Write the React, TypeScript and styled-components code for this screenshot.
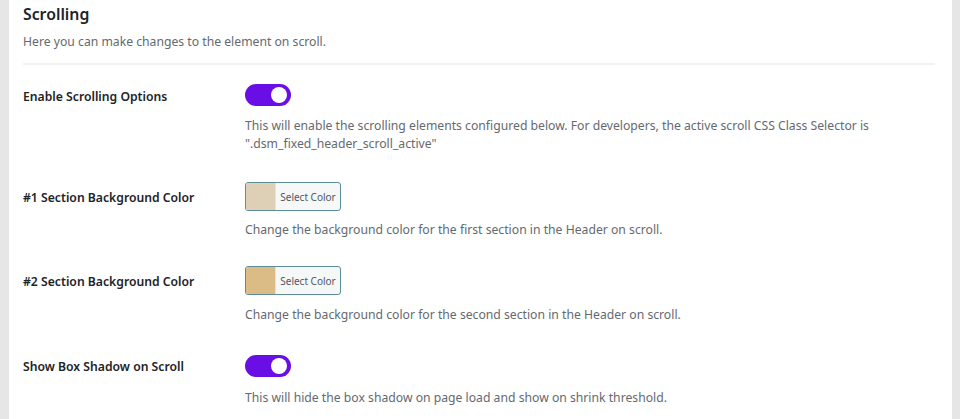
import React from "react";
import styled, { createGlobalStyle } from "styled-components";

const Global = createGlobalStyle`
  html, body { margin: 0; padding: 0; background: #e6e6e6; }
  body { font-family: "Noto Sans", "Open Sans", sans-serif; }
`;

const Page = styled.div`
  padding: 0 8px 0 9px;
  height: 419px;
  overflow: hidden;
`;

const Panel = styled.div`
  background: #ffffff;
  height: 100%;
  padding: 0 17px 0 14px;
  box-sizing: border-box;
`;

const Header = styled.div`
  padding-top: 3px;
  padding-bottom: 12px;
  border-bottom: 2px solid #f2f2f2;
`;

const Title = styled.h2`
  margin: 0;
  font-size: 15.8px;
  font-weight: 600;
  line-height: 23px;
  color: #1d2327;
`;

const Subtitle = styled.p`
  margin: 7px 0 0;
  font-size: 12.2px;
  line-height: 18px;
  color: #646970;
`;

const Row = styled.div<{ $top: number }>`
  display: grid;
  grid-template-columns: 222px 1fr;
  padding-top: ${(p) => p.$top}px;
`;

const Label = styled.div<{ $offset: number }>`
  font-size: 12.2px;
  font-weight: 600;
  line-height: 20px;
  color: #1d2327;
  padding-top: ${(p) => p.$offset}px;
`;

const Control = styled.div`
  display: flex;
  flex-direction: column;
  align-items: flex-start;
`;

const Toggle = styled.div`
  width: 46px;
  height: 22px;
  border-radius: 11px;
  background: #6a0ee6;
  position: relative;
  &::after {
    content: "";
    position: absolute;
    right: 4px;
    top: 3px;
    width: 16px;
    height: 16px;
    border-radius: 50%;
    background: #fff;
  }
`;

const ColorButton = styled.div`
  display: flex;
  width: 96px;
  height: 29px;
  box-sizing: border-box;
  border: 1px solid #5d8d9b;
  border-radius: 3px;
  overflow: hidden;
  background: #f6f7f7;
`;

const Swatch = styled.span<{ $color: string }>`
  width: 29px;
  background: ${(p) => p.$color};
  border-right: 1px solid #e2e4e7;
`;

const ButtonText = styled.span`
  flex: 1;
  display: flex;
  align-items: center;
  justify-content: center;
  font-size: 10px;
  color: #50575e;
`;

const Desc = styled.p<{ $gap: number }>`
  margin: ${(p) => p.$gap}px 0 0;
  font-size: 12.2px;
  line-height: 18px;
  color: #646970;
  max-width: 660px;
`;

export default function App() {
  return (
    <>
      <Global />
      <Page>
        <Panel>
          <Header>
            <Title>Scrolling</Title>
            <Subtitle>Here you can make changes to the element on scroll.</Subtitle>
          </Header>
          <Row $top={19}>
            <Label $offset={3}>Enable Scrolling Options</Label>
            <Control>
              <Toggle />
              <Desc $gap={11}>
                This will enable the scrolling elements configured below. For developers, the active scroll CSS Class
                Selector is ".dsm_fixed_header_scroll_active"
              </Desc>
            </Control>
          </Row>
          <Row $top={29}>
            <Label $offset={6}>#1 Section Background Color</Label>
            <Control>
              <ColorButton>
                <Swatch $color="#ddd0b6" />
                <ButtonText>Select Color</ButtonText>
              </ColorButton>
              <Desc $gap={10}>Change the background color for the first section in the Header on scroll.</Desc>
            </Control>
          </Row>
          <Row $top={27}>
            <Label $offset={6}>#2 Section Background Color</Label>
            <Control>
              <ColorButton>
                <Swatch $color="#dcbc86" />
                <ButtonText>Select Color</ButtonText>
              </ColorButton>
              <Desc $gap={11}>Change the background color for the second section in the Header on scroll.</Desc>
            </Control>
          </Row>
          <Row $top={31}>
            <Label $offset={2}>Show Box Shadow on Scroll</Label>
            <Control>
              <Toggle />
              <Desc $gap={12}>This will hide the box shadow on page load and show on shrink threshold.</Desc>
            </Control>
          </Row>
        </Panel>
      </Page>
    </>
  );
}
